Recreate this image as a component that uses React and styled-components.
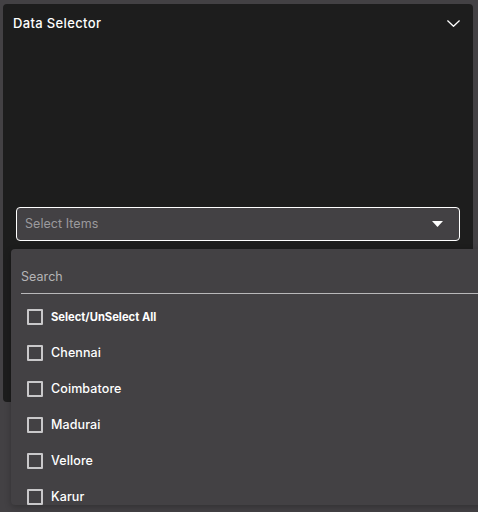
import React from "react";
import styled, { createGlobalStyle } from "styled-components";

const Global = createGlobalStyle`
  html, body { margin: 0; padding: 0; background: #434144; overflow: hidden; }
  body { font-family: Inter, "Liberation Sans", sans-serif; width: 478px; height: 512px; }
`;
const Page = styled.div`
  position: relative;
  width: 478px;
  height: 512px;
  padding: 4px 5px 0 3px;
  box-sizing: border-box;
  overflow: hidden;
`;
const Panel = styled.section`
  height: 398px;
  background: #1d1d1d;
  border-radius: 4px;
  padding: 0 13px;
  box-sizing: border-box;
`;
const Header = styled.header`
  display: flex;
  align-items: center;
  justify-content: space-between;
  height: 39px;
  margin-left: -3px;
  padding-bottom: 2px;
  box-sizing: border-box;
  color: #fff;
  font-size: 13px;
  font-weight: 500;
  letter-spacing: 0.35px;
`;
const Chevron = styled.svg`
  width: 13px;
  height: 7px;
  margin-top: 2px;
  fill: none;
  stroke: #fff;
  stroke-width: 1.3;
  display: block;
`;
const Select = styled.div`
  display: flex;
  align-items: center;
  justify-content: space-between;
  height: 34px;
  width: 444px;
  box-sizing: border-box;
  margin-top: 164px;
  padding: 0 16px 2px 8px;
  background: #434144;
  border: 1px solid #fff;
  border-radius: 4px;
  color: #9b9a9d;
  font-size: 12.5px;
  letter-spacing: 0.05px;
`;
const Caret = styled.svg`
  width: 11px;
  height: 6px;
  fill: #fff;
  display: block;
  margin-top: 1px;
`;
const Menu = styled.div`
  position: absolute;
  left: 11px;
  top: 249px;
  width: 480px;
  height: 256px;
  background: #434144;
  border-radius: 4px;
  box-shadow: 0 2px 6px rgba(0, 0, 0, 0.25);
  overflow: hidden;
`;
const SearchBox = styled.div`
  margin: 0 0 0 10px;
  height: 45px;
  box-sizing: border-box;
  padding-top: 20px;
  border-bottom: 1px solid #b9b8ba;
  color: #b5b4b6;
  font-size: 12.5px;
  line-height: 16px;
  letter-spacing: 0.05px;
`;
const List = styled.ul`
  list-style: none;
  margin: 0;
  padding: 5px 0 0 16px;
`;
const Row = styled.li`
  display: flex;
  align-items: center;
  gap: 8px;
  height: 36px;
  color: #fff;
  font-size: ${(p) => (p.$bold ? "11.2px" : "12.5px")};
  font-weight: ${(p) => (p.$bold ? 700 : 500)};
  letter-spacing: ${(p) => (p.$bold ? "0" : "0.1px")};
`;
const Label = styled.span`
  padding-bottom: ${(p) => (p.$bold ? "0" : "2px")};
`;
const Check = styled.span`
  width: 16px;
  height: 16px;
  box-sizing: border-box;
  border: 2px solid #c9c8ca;
  border-radius: 1px;
  flex: none;
`;

const items = ["Chennai", "Coimbatore", "Madurai", "Vellore", "Karur"];

export default function App() {
  return (
    <Page>
      <Global />
      <Panel>
        <Header>
          Data Selector
          <Chevron viewBox="0 0 13 7"><path d="M0.4 0.5 L6.5 6.3 L12.6 0.5" /></Chevron>
        </Header>
        <Select>
          Select Items
          <Caret viewBox="0 0 11 6"><path d="M0 0 H11 L5.5 6 Z" /></Caret>
        </Select>
      </Panel>
      <Menu>
        <SearchBox>Search</SearchBox>
        <List>
          <Row $bold><Check /><Label $bold>Select/UnSelect All</Label></Row>
          {items.map((t) => (
            <Row key={t}><Check /><Label>{t}</Label></Row>
          ))}
        </List>
      </Menu>
    </Page>
  );
}
